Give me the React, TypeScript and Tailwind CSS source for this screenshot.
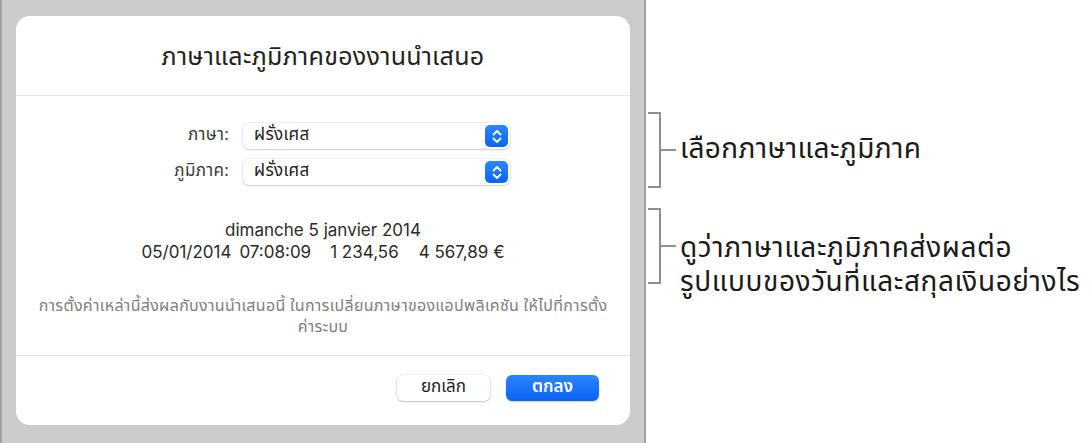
import React from "react";

const thai = "font-['Noto_Sans_Thai','Noto_Sans_Thai_UI','Thonburi','Noto_Sans',sans-serif]";
const latin = "font-['Inter','Noto_Sans_Thai','Noto_Sans',sans-serif]";

function Stepper() {
  return (
    <span className="flex h-[22px] w-[23px] items-center justify-center rounded-[5px] bg-gradient-to-b from-[#2b86ff] to-[#0a63f6]">
      <svg width="10" height="15" viewBox="0 0 10 15" fill="none" stroke="white" strokeWidth="1.8" strokeLinecap="round" strokeLinejoin="round">
        <path d="M1.5 5.5 L5 2 L8.5 5.5" />
        <path d="M1.5 9.5 L5 13 L8.5 9.5" />
      </svg>
    </span>
  );
}

function PopupRow({ label, value }: { label: string; value: string }) {
  return (
    <div className="flex items-center">
      <span className={`w-[227px] pr-[14px] text-right text-[17px] tracking-[0.3px] text-[#3a3a3a] ${thai}`}>{label}</span>
      <div className="flex h-[26px] w-[267px] items-center justify-between rounded-[6px] bg-white pl-[11px] pr-[2px] shadow-[0_0_0_0.5px_rgba(0,0,0,0.12),0_1px_2px_rgba(0,0,0,0.15)]">
        <span className={`text-[17px] tracking-[0.3px] text-[#222] ${thai}`}>{value}</span>
        <Stepper />
      </div>
    </div>
  );
}

function Bracket({ height }: { height: number }) {
  return (
    <div className="relative w-[13px] shrink-0 border-y-2 border-r-2 border-[#8f8f8f]" style={{ height }}>
      <div className="absolute left-full top-1/2 h-[2px] w-[17px] -translate-y-1/2 bg-[#8f8f8f]" />
    </div>
  );
}

export default function App() {
  return (
    <div className="flex h-[443px] w-[1089px] bg-white">
      <div className="h-full w-[646px] shrink-0 border-x-2 border-[#a3a3a3] bg-[#cccccc] px-[14px] pt-[16px]">
        <div className="flex h-[409px] flex-col rounded-[14px] bg-white">
          <div className="flex h-[80px] items-center justify-center border-b border-[#e6e6e6] pt-[4px]">
            <h1 className={`text-[25px] tracking-[0.3px] text-[#222] ${thai}`}>ภาษาและภูมิภาคของงานนำเสนอ</h1>
          </div>

          <div className="flex flex-col gap-[10px] pt-[27px]">
            <PopupRow label="ภาษา:" value="ฝรั่งเศส" />
            <PopupRow label="ภูมิภาค:" value="ฝรั่งเศส" />
          </div>

          <div className={`mt-[34px] flex flex-col items-center text-[17px] leading-[22px] text-[#2a2a2a] ${latin}`}>
            <span>dimanche 5 janvier 2014</span>
            <span className="flex">
              <span>05/01/2014</span>
              <span className="ml-[8px]">07:08:09</span>
              <span className="ml-[19px]">1 234,56</span>
              <span className="ml-[20px]">4 567,89 €</span>
            </span>
          </div>

          <p className={`mt-[33px] whitespace-nowrap px-[4px] text-center text-[16px] leading-[21px] tracking-[0.3px] text-[#808080] ${thai}`}>
            การตั้งค่าเหล่านี้ส่งผลกับงานนำเสนอนี้ ในการเปลี่ยนภาษาของแอปพลิเคชัน ให้ไปที่การตั้ง
            <br />
            ค่าระบบ
          </p>

          <div className="mt-auto flex h-[70px] items-start justify-end gap-[16px] border-t border-[#e6e6e6] pr-[31px] pt-[19px]">
            <button className={`flex h-[26px] w-[93px] items-center justify-center rounded-[6px] bg-white text-[17px] text-[#222] shadow-[0_0_0_0.5px_rgba(0,0,0,0.12),0_1px_2px_rgba(0,0,0,0.2)] ${thai}`}>
              ยกเลิก
            </button>
            <button className={`flex h-[26px] w-[93px] items-center justify-center rounded-[6px] bg-gradient-to-b from-[#2a86ff] to-[#0a62f5] text-[17px] font-semibold text-white shadow-[0_1px_2px_rgba(0,0,0,0.2)] ${thai}`}>
              ตกลง
            </button>
          </div>
        </div>
      </div>

      <div className={`flex flex-col pl-[2px] text-[#1a1a1a] ${thai}`}>
        <div className="mt-[112px] flex items-center">
          <Bracket height={76} />
          <span className="ml-[19px] text-[28px] leading-[34px] tracking-[0.4px]">เลือกภาษาและภูมิภาค</span>
        </div>
        <div className="mt-[20px] flex items-start">
          <Bracket height={76} />
          <span className="ml-[19px] mt-[24px] whitespace-nowrap text-[28px] leading-[34px] tracking-[0.6px]">
            ดูว่าภาษาและภูมิภาคส่งผลต่อ
            <br />
            รูปแบบของวันที่และสกุลเงินอย่างไร
          </span>
        </div>
      </div>
    </div>
  );
}
